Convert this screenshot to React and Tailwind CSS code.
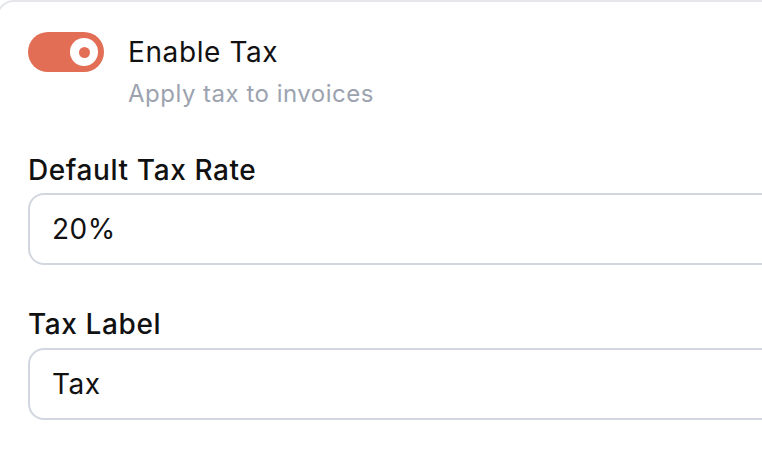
export default function App() {
  return (
    <div
      className="w-[762px] h-[450px] overflow-hidden bg-white"
      style={{ fontFamily: 'Inter, "Open Sans", sans-serif' }}
    >
      <div className="ml-[-4px] w-[900px] h-[470px] rounded-tl-[18px] border-2 border-[#e5e7eb] bg-white pl-[30px] pt-[30px]">
        {/* toggle row */}
        <div className="flex items-start gap-6">
          <button className="flex h-10 w-[76px] shrink-0 items-center justify-end rounded-full bg-[#e36e56] pr-[6px]">
            <span className="flex h-7 w-7 items-center justify-center rounded-full bg-white">
              <span className="h-[11px] w-[11px] rounded-full bg-[#e36e56]" />
            </span>
          </button>
          <div className="flex flex-col">
            <span className="text-[28px] leading-10 tracking-[0.6px] text-[#111111]">Enable Tax</span>
            <span className="mt-[6px] text-[24px] leading-8 tracking-[0.5px] text-[#9ca3af]">Apply tax to invoices</span>
          </div>
        </div>

        {/* default tax rate */}
        <div className="mt-10 flex flex-col">
          <label className="text-[28px] font-medium leading-10 tracking-[0.6px] text-[#111111]">Default Tax Rate</label>
          <div className="mt-[3px] flex h-[72px] items-center rounded-[16px] border-2 border-[#d2d7df] pl-[22px] text-[28px] tracking-[0.5px] text-[#111111]">
            20%
          </div>
        </div>

        {/* tax label */}
        <div className="mt-[39px] flex flex-col">
          <label className="text-[28px] font-medium leading-10 tracking-[0.6px] text-[#111111]">Tax Label</label>
          <div className="mt-[4px] flex h-[72px] items-center rounded-[16px] border-2 border-[#d2d7df] pl-[22px] text-[28px] tracking-[0.5px] text-[#111111]">
            Tax
          </div>
        </div>
      </div>
    </div>
  );
}
